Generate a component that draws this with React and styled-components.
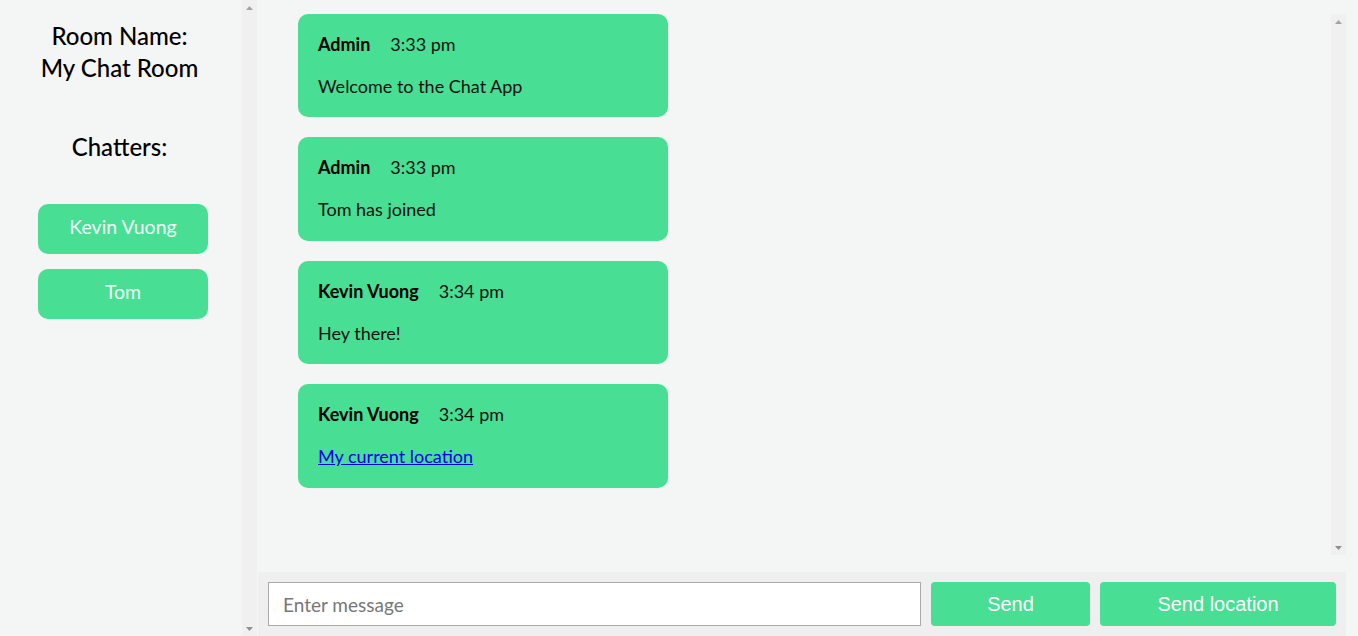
import React from "react";
import styled, { createGlobalStyle } from "styled-components";

const GREEN = "#48de93";

const messages = [
  { id: 1, author: "Admin", time: "3:33 pm", text: "Welcome to the Chat App" },
  { id: 2, author: "Admin", time: "3:33 pm", text: "Tom has joined" },
  { id: 3, author: "Kevin Vuong", time: "3:34 pm", text: "Hey there!" },
  { id: 4, author: "Kevin Vuong", time: "3:34 pm", url: "#", text: "My current location" },
];

const chatters = ["Kevin Vuong", "Tom"];

// the page's classic scrollbars, drawn since headless hides real ones
const ScrollBar = () => (
  <Rail>
    <ArrowBox>
      <svg width="7" height="4" viewBox="0 0 7 4">
        <polygon points="0,4 3.5,0 7,4" fill="#a3a3a3" />
      </svg>
    </ArrowBox>
    <ArrowBox>
      <svg width="7" height="4" viewBox="0 0 7 4">
        <polygon points="0,0 7,0 3.5,4" fill="#8f8f8f" />
      </svg>
    </ArrowBox>
  </Rail>
);

const App = () => {
  return (
    <>
      <GlobalStyle />
      <Wrapper>
        <Sidebar>
          <SidebarContent>
            <RoomTitle>
              Room Name:
              <br />
              My Chat Room
            </RoomTitle>
            <ListTitle>Chatters:</ListTitle>
            <UserList>
              {chatters.map((name) => (
                <UserItem key={name}>{name}</UserItem>
              ))}
            </UserList>
          </SidebarContent>
          <ScrollBar />
        </Sidebar>
        <Main>
          <MessagesArea>
            <Messages>
              {messages.map((m) => (
                <Message key={m.id}>
                  <Meta>
                    <Author>{m.author}</Author>
                    <Time>{m.time}</Time>
                  </Meta>
                  <Body>
                    {m.url ? <Link href={m.url}>{m.text}</Link> : m.text}
                  </Body>
                </Message>
              ))}
            </Messages>
            <ScrollBar />
          </MessagesArea>
          <Compose>
            <Input placeholder="Enter message" />
            <Button $width="159px">Send</Button>
            <Button $width="236px">Send location</Button>
          </Compose>
        </Main>
      </Wrapper>
    </>
  );
};

const GlobalStyle = createGlobalStyle`
  * {
    box-sizing: border-box;
  }
  html, body {
    margin: 0;
    padding: 0;
    height: 100%;
    background: #f4f5f5;
    font-family: Lato, "Noto Sans", sans-serif;
  }
`;

const Wrapper = styled.div`
  display: flex;
  height: 100vh;
  overflow: hidden;
`;

const Rail = styled.div`
  width: 15px;
  flex-shrink: 0;
  background: #f0f0f0;
  display: flex;
  flex-direction: column;
  justify-content: space-between;
`;

const ArrowBox = styled.div`
  height: 15px;
  display: flex;
  align-items: center;
  justify-content: center;
`;

const Sidebar = styled.div`
  width: 257px;
  flex-shrink: 0;
  height: 100vh;
  display: flex;
  background: #f4f5f5;
`;

const SidebarContent = styled.div`
  flex: 1;
  padding-top: 20px;
`;

const RoomTitle = styled.h2`
  margin: 0;
  padding-right: 3px;
  font-size: 24px;
  font-weight: 500;
  line-height: 32px;
  text-align: center;
  color: #000;
`;

const ListTitle = styled.h3`
  margin: 47px 0 0;
  padding-right: 3px;
  font-size: 24px;
  font-weight: 500;
  line-height: 32px;
  text-align: center;
  color: #000;
`;

const UserList = styled.ul`
  list-style: none;
  margin: 41px 0 0;
  padding: 0 0 0 38px;
  display: flex;
  flex-direction: column;
  gap: 15px;
`;

const UserItem = styled.li`
  width: 170px;
  height: 50px;
  border-radius: 10px;
  background: ${GREEN};
  color: #f2fff7;
  font-size: 19.5px;
  padding-bottom: 6px;
  display: flex;
  align-items: center;
  justify-content: center;
`;

const Main = styled.div`
  flex: 1;
  display: flex;
  flex-direction: column;
  padding-left: 1px;
  padding-right: 12px;
  min-width: 0;
`;

const MessagesArea = styled.div`
  flex: 1;
  display: flex;
  margin-top: 14px;
  min-height: 0;
`;

const Messages = styled.div`
  flex: 1;
  overflow: hidden;
  padding-left: 40px;
  margin-top: -0.4px;
  display: flex;
  flex-direction: column;
  gap: 20px;
`;

const Message = styled.div`
  width: 370px;
  flex-shrink: 0;
  background: ${GREEN};
  border-radius: 10px;
  padding: 20px 20px 20.5px;
`;

const Meta = styled.div`
  display: flex;
  align-items: baseline;
  gap: 20px;
  line-height: 22px;
  margin-top: -1px;
`;

const Author = styled.span`
  font-size: 18px;
  font-weight: 700;
  color: #000;
`;

const Time = styled.span`
  font-size: 18px;
  color: #111;
`;

const Body = styled.p`
  margin: 20px 0 0;
  font-size: 18px;
  line-height: 22px;
  color: #111;
`;

const Link = styled.a`
  color: #0000ee;
  text-decoration: underline;
`;

const Compose = styled.div`
  margin-top: 17px;
  background: #efefef;
  padding: 10px;
  display: flex;
  gap: 10px;
  height: 64px;
  flex-shrink: 0;
`;

const Input = styled.input`
  flex: 1;
  height: 44px;
  border: 1px solid #a9a9a9;
  background: #fff;
  padding: 0 14px;
  font-family: Lato, "Noto Sans", sans-serif;
  font-size: 19px;
  outline: none;
  &::placeholder {
    color: #777;
  }
`;

const Button = styled.button`
  width: ${(p) => p.$width};
  height: 44px;
  border: none;
  border-radius: 4px;
  background: ${GREEN};
  color: #fff;
  font-family: "Liberation Sans", Arial, sans-serif;
  font-size: 20px;
  cursor: pointer;
`;

export default App;
